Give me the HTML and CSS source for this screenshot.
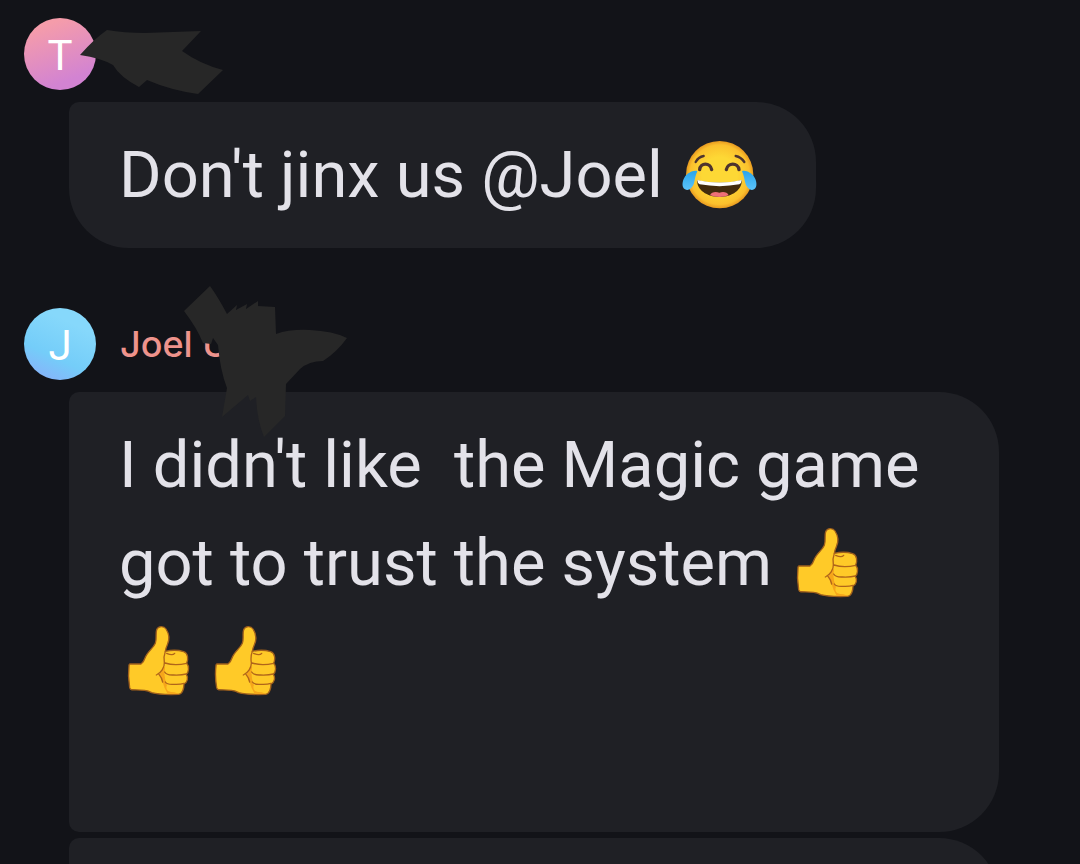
FILE: index.html
```html
<!DOCTYPE html>
<html lang="en">
<head>
  <meta charset="UTF-8" />
  <meta name="viewport" content="width=device-width, initial-scale=1.0"/>
  <title>Group chat</title>
  <link rel="stylesheet" href="styles.css">
</head>
<body>

  <!-- Emoji shapes -->
  <svg class="defs" aria-hidden="true">
    <defs>
      <radialGradient id="face" cx="50%" cy="50%" r="52%">
        <stop offset="50%" stop-color="#fdd835"/>
        <stop offset="85%" stop-color="#fbc02d"/>
        <stop offset="100%" stop-color="#e08c1c"/>
      </radialGradient>
      <linearGradient id="tear" x1="0" y1="0" x2="0" y2="1">
        <stop offset="0" stop-color="#29a5ea"/>
        <stop offset="1" stop-color="#5cc3fa"/>
      </linearGradient>
    </defs>
    <symbol id="joy" viewBox="36 30 240 240">
      <circle cx="158" cy="149" r="101" fill="url(#face)"/>
      <g fill="none" stroke="#4e342e" stroke-linecap="round">
        <path stroke-width="7" d="M86 111Q94 96 110 93M206 93Q222 96 232 111"/>
        <path stroke-width="10" d="M98 134C100 112 130 112 134 134M178 134C182 112 213 112 216 134"/>
      </g>
      <path fill="#422b0d" d="M91 166Q158 181 224 166C226 194 196 216 158 216S88 194 91 166Z"/>
      <path fill="#fff" d="M91 165Q158 180 224 165Q224 174 217 178Q158 189 98 178Q91 174 91 165Z"/>
      <path fill="#ef7077" d="M129 211C133 200 147 199 157 203C167 199 181 200 185 211Q158 221 129 211Z"/>
      <path fill="url(#tear)" d="M91 139C82 134 61 143 52 158C45 170 44 187 54 193C66 199 77 188 81 174C84 162 86 149 91 139Z"/>
      <path fill="url(#tear)" d="M225 139C234 134 254 143 263 158C270 170 271 187 261 193C250 199 239 188 235 174C232 162 230 149 225 139Z"/>
    </symbol>
    <symbol id="thumb" viewBox="27 21 240 240">
      <path fill="#ffca28" stroke="#a0601c" stroke-width="4" stroke-linejoin="round" d="M60 150L93 150Q101 145 105 132C112 113 130 103 136 88C141 76 136 59 140 47C145 35 162 36 168 45C178 60 178 79 172 92Q167 103 166 112Q196 105 221 113C235 118 235 136 230 148C239 157 236 175 229 181C236 191 232 206 222 210C222 222 218 240 206 241Q151 243 125 236Q115 230 104 229L67 227Q61 228 59 221Q53 187 57 155Q57 151 60 150Z"/>
      <path fill="#f6a61b" d="M160 158Q151 174 147 181L158 204Q163 225 173 239L206 240Q174 226 169 209Q160 180 166 160Z"/>
      <path fill="#ffca28" d="M168 119Q194 113 218 118C229 123 227 143 217 147Q190 154 168 148Q162 133 168 119ZM167 155Q194 160 222 153C234 159 229 178 217 179Q187 184 168 176Q162 164 167 155ZM168 184Q194 190 220 184C230 190 224 206 213 208Q187 210 172 205Q163 195 168 184ZM171 212Q192 217 215 211Q220 231 206 234Q186 237 174 231Q166 222 171 212Z"/>
      <path fill="none" stroke="#b0651a" stroke-width="4" stroke-linecap="round" d="M166 112Q160 128 163 146C164 161 153 177 139 183M147 181Q155 190 158 204M165 147Q194 156 230 148M164 174Q170 184 190 183Q214 184 229 180M166 204Q171 212 190 211Q211 212 222 208M170 118Q188 126 194 118"/>
    </symbol>
  </svg>

  <main class="chat">
    <!-- First message -->
    <section class="message">
      <header class="sender">
        <span class="avatar avatar-pink">T</span>
        <svg class="scribble scribble-first" viewBox="80 28 144 68" aria-hidden="true">
          <path d="M80 55Q94 39 107 30Q124 33 145 33L201 31L182 51Q200 64 223 70L198 94Q170 90 147 80L139 87Q120 77 113 65Q101 58 80 55Z"/>
        </svg>
      </header>
      <p class="bubble bubble-last">Don't jinx us @Joel <svg class="emoji" role="img" aria-label="Face with tears of joy"><use href="#joy"/></svg></p>
    </section>

    <!-- Second message -->
    <section class="message">
      <header class="sender">
        <span class="avatar avatar-blue">J</span>
        <span class="name">Joel U</span>
        <svg class="scribble scribble-second" viewBox="184 286 164 152" aria-hidden="true">
          <path d="M184 311L210 286Q218 297 227 314L237 305L236 310L247 304L246 309L258 301L258 306L275 307L276 334Q290 329 310 330Q333 331 347 338Q337 352 323 361Q309 361 300 369L286 384L285 416L264 437Q257 420 256 397L250 401L248 395L222 417L227 388Q220 370 218 345L213 338L211 344L203 343Q197 328 184 311Z"/>
        </svg>
      </header>
      <p class="bubble bubble-wide">I didn't like  the Magic game<br>got to trust the system <svg class="emoji" role="img" aria-label="Thumbs up"><use href="#thumb"/></svg><br><svg class="emoji" role="img" aria-label="Thumbs up"><use href="#thumb"/></svg><svg class="emoji" role="img" aria-label="Thumbs up"><use href="#thumb"/></svg><br><br></p>
      <p class="bubble bubble-wide"></p>
    </section>
  </main>

</body>
</html>
```
FILE: styles.css
```css
* {
  box-sizing: border-box;
}
body {
  margin: 0;
  background-color: #121318;
  color: #e3e2e9;
  font-family: Roboto, "Liberation Sans", sans-serif;
}
.defs {
  position: absolute;
  width: 0;
  height: 0;
}
.chat {
  display: flex;
  flex-direction: column;
  gap: 60px;
  height: 100vh;
  padding: 18px 81px 0 24px;
  overflow: hidden;
}
.message {
  display: flex;
  flex-direction: column;
  align-items: flex-start;
}
.sender {
  position: relative;
  display: flex;
  align-items: center;
  gap: 24px;
  margin-bottom: 12px;
}
.avatar {
  display: flex;
  align-items: center;
  justify-content: center;
  width: 72px;
  height: 72px;
  padding-top: 2px;
  border-radius: 50%;
  color: white;
  font-size: 42px;
}
.avatar-pink {
  background: linear-gradient(160deg, #f59caa 15%, #d283d2 80%);
}
.avatar-blue {
  background: linear-gradient(205deg, #86d8fb 25%, #74cdf9 65%, #86b4fa 90%);
}
.name {
  color: #ee938c;
  font-family: Inter, Roboto, sans-serif;
  font-size: 36px;
  font-weight: 500;
}
/* Marker strokes over the names */
.scribble {
  position: absolute;
  fill: #272727;
}
.scribble-first {
  top: 10px;
  left: 56px;
  width: 144px;
  height: 68px;
}
.scribble-second {
  top: -22px;
  left: 160px;
  width: 164px;
  height: 152px;
}
.bubble {
  min-height: 146px;
  margin: 0 0 6px 45px;
  padding: 24px 50px;
  background-color: #1f2025;
  border-radius: 10px 60px 60px 10px;
  font-size: 65px;
  line-height: 98px;
  white-space: pre-wrap;
}
.bubble-last {
  margin-bottom: 0;
  border-radius: 10px 60px 60px 60px;
}
.bubble-wide {
  align-self: stretch;
}
.emoji {
  width: 80px;
  height: 80px;
  margin-right: 7px;
  vertical-align: -18px;
}
```
